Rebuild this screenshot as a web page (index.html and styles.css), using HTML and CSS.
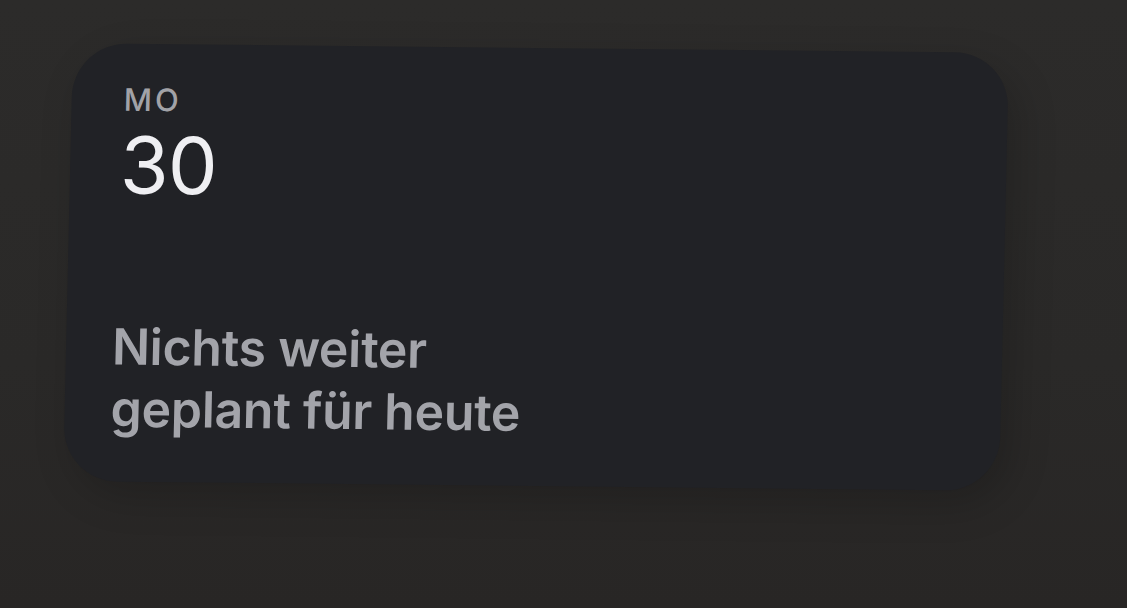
FILE: index.html
```html
<!DOCTYPE html>
<html lang="de">
<head>
  <meta charset="UTF-8">
  <meta name="viewport" content="width=device-width, initial-scale=1.0">
  <title>Kalender Widget</title>
  <link rel="stylesheet" href="styles.css">
</head>
<body>

  <div class="widget">
    <div class="date">
      <div class="weekday">MO</div>
      <div class="day">30</div>
    </div>
    <div class="events">Nichts weiter<br>geplant für heute</div>
  </div>

</body>
</html>
```

FILE: styles.css
```css
html, body {
  height: 100%;
}
body {
  margin: 0;
  font-family: 'Inter', 'Noto Sans', sans-serif;
  background: linear-gradient(180deg, #2c2b2a 0%, #2a2928 60%, #282625 100%);
  overflow: hidden;
  padding: 48px 0 0 68px;
  box-sizing: border-box;
}
.widget {
  width: 936px;
  height: 438px;
  box-sizing: border-box;
  background-color: #212226;
  border-radius: 54px;
  padding: 38px 46px 42px 50px;
  display: flex;
  flex-direction: column;
  justify-content: space-between;
  transform: skew(-1.3deg, 0.6deg);
  box-shadow: 10px 14px 40px rgba(0, 0, 0, 0.18);
}
.weekday {
  font-size: 31px;
  font-weight: 500;
  letter-spacing: 3px;
  color: #a2a2a7;
  line-height: 36px;
  margin-left: 2px;
}
.day {
  font-size: 79px;
  font-weight: 400;
  color: #efeff2;
  line-height: 80px;
  margin-top: 7px;
  letter-spacing: -1px;
}
.events {
  font-size: 50px;
  font-weight: 600;
  color: #a3a4aa;
  line-height: 62px;
  letter-spacing: -0.3px;
  margin-left: -4px;
}
```
